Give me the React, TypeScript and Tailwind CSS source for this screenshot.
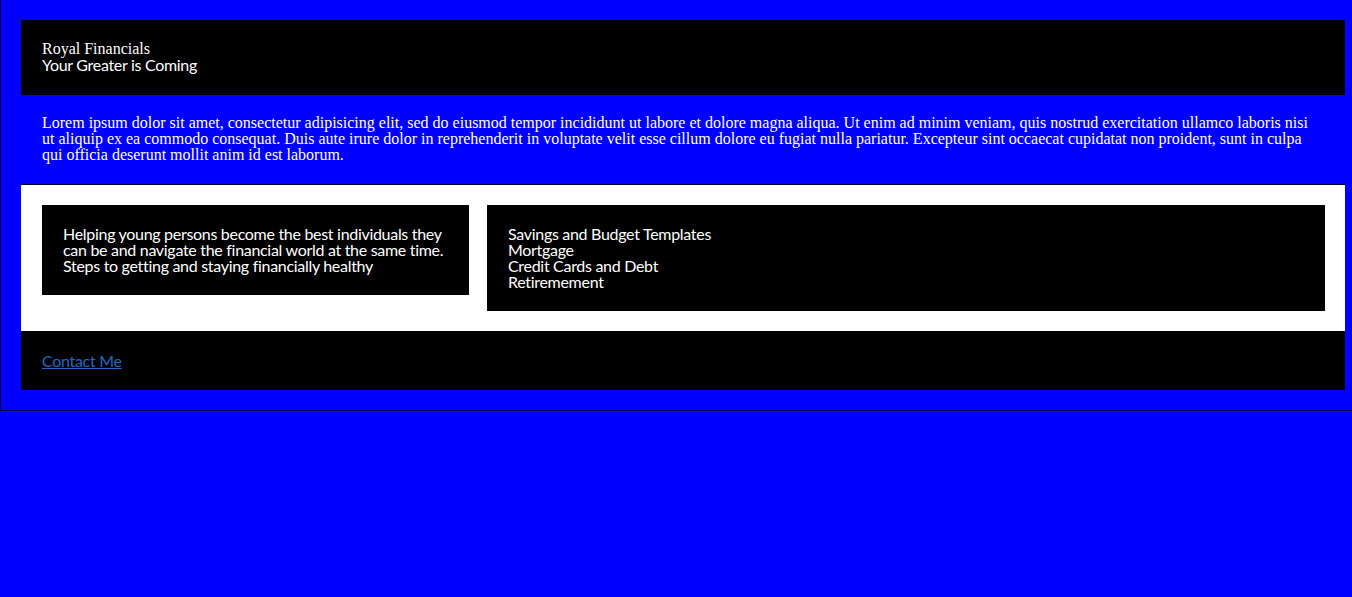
import React from "react";

const sans = "font-['Lato','Noto_Sans',sans-serif] tracking-[-0.3px]";
const serif = "font-['Liberation_Serif','Times_New_Roman',serif]";

export default function App() {
  return (
    <div className="min-h-[597px] bg-[#0000ff] text-white">
      <div className="border-l border-b border-[#000040] pl-5 pt-5 pb-5">
        <div className="w-[1324px]">
          <header className="bg-black pl-[21px] pr-5 pt-[21px] pb-[22px]">
            <div className={`${serif} text-[16px] leading-4`}>Royal Financials</div>
            <div className={`${sans} text-[16px] leading-4`}>Your Greater is Coming</div>
          </header>
          <section className={`bg-[#0000ff] border-b border-[#000030] pl-[21px] pr-[32px] pt-5 pb-[21px] ${serif} text-[16px] leading-4`}>
            Lorem ipsum dolor sit amet, consectetur adipisicing elit, sed do eiusmod tempor incididunt ut labore et dolore magna aliqua. Ut enim ad minim veniam, quis nostrud exercitation ullamco laboris nisi ut aliquip ex ea commodo consequat. Duis aute irure dolor in reprehenderit in voluptate velit esse cillum dolore eu fugiat nulla pariatur. Excepteur sint occaecat cupidatat non proident, sunt in culpa qui officia deserunt mollit anim id est laborum.
          </section>
          <main className={`bg-white pl-[21px] pr-5 py-5 flex items-start gap-[18px] ${sans} text-[16px] leading-4`}>
            <div className="w-[427px] shrink-0 bg-black border border-black p-5">
              <div>Helping young persons become the best individuals they can be and navigate the financial world at the same time.</div>
              <div>Steps to getting and staying financially healthy</div>
            </div>
            <div className="flex-1 bg-black border border-black p-5">
              <div>Savings and Budget Templates</div>
              <div>Mortgage</div>
              <div>Credit Cards and Debt</div>
              <div>Retiremement</div>
            </div>
          </main>
          <footer className={`bg-black pl-[21px] pr-5 pt-[22px] pb-[21px] ${sans} text-[16px] leading-4`}>
            <a href="#" className="text-[#2468c0] underline">Contact Me</a>
          </footer>
        </div>
      </div>
    </div>
  );
}
